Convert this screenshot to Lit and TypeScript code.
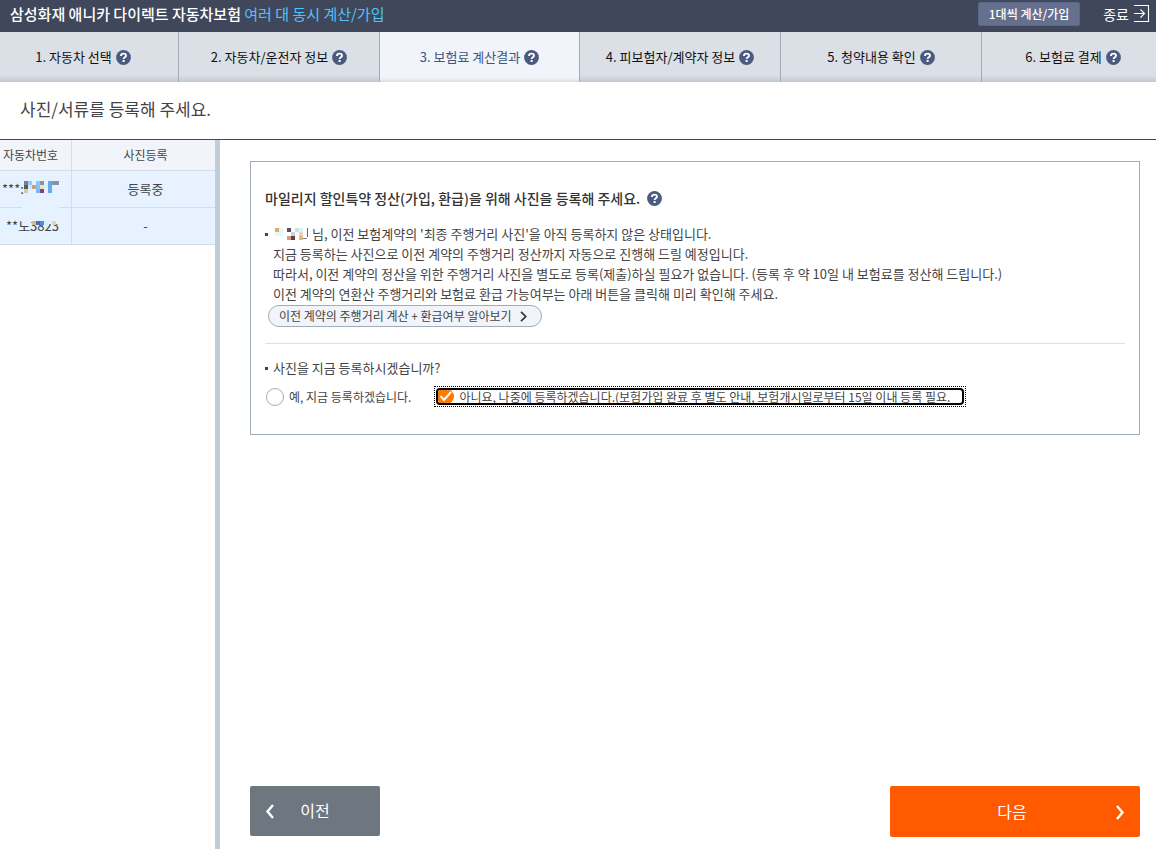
import { LitElement, html, css, svg } from "lit";
import { customElement, property, state } from "lit/decorators.js";
import { classMap } from "lit/directives/class-map.js";

@customElement("help-button")
class HelpButton extends LitElement {
  static styles = css`
    :host { display: inline-flex; }
    button { all: unset; display: flex; cursor: pointer; }
    svg { display: block; }
  `;
  @property() topic = "";
  render() {
    return html`<button type="button" aria-label="${this.topic} 도움말">
      <svg width="15" height="15" viewBox="0 0 15 15">
        <circle cx="7.5" cy="7.5" r="7.4" fill="#4a5a80"></circle>
        <path d="M5 5.9C5 4.4 6.1 3.6 7.5 3.6S10 4.4 10 5.7C10 7.2 7.6 7.3 7.6 9" fill="none" stroke="#fff" stroke-width="1.9"></path>
        <rect x="6.6" y="10" width="2" height="2" fill="#fff"></rect>
      </svg>
    </button>`;
  }
}

type Block = [number, number, number, number, string];

@customElement("masked-text")
class MaskedText extends LitElement {
  static styles = css`
    :host { display: inline-flex; }
    svg { display: block; }
  `;
  @property({ attribute: false }) blocks: Block[] = [];
  @property({ type: Number }) width = 36;
  @property({ type: Number }) height = 12;
  render() {
    return html`<svg width=${this.width} height=${this.height} shape-rendering="crispEdges" aria-hidden="true">
      ${this.blocks.map(([x, y, w, h, c]) => svg`<rect x=${x} y=${y} width=${w} height=${h} fill=${c}></rect>`)}
    </svg>`;
  }
}

const PLATE_ONE: Block[] = [
  [0, 0, 4, 4, "#6f8499"], [4, 0, 4, 4, "#94c9f8"], [12, 0, 4, 4, "#8ec6fb"], [16, 0, 4, 4, "#8b949e"],
  [24, 0, 4, 4, "#62a8ec"], [28, 0, 7, 4, "#8b949c"],
  [0, 4, 4, 4, "#555a5c"], [4, 4, 4, 4, "#cdeafc"], [8, 4, 4, 4, "#d1a068"], [12, 4, 4, 4, "#86bffa"],
  [16, 4, 4, 4, "#e9e3c4"], [20, 4, 4, 4, "#d3f0ff"], [24, 4, 4, 4, "#6aaae8"],
  [0, 8, 4, 4, "#e7c590"], [12, 8, 4, 4, "#7cb9fa"], [16, 8, 4, 4, "#84456c"], [24, 8, 4, 4, "#6aaae8"],
];
const PLATE_TWO: Block[] = [
  [0, 0, 37, 18, "#e6f2ff"], [10, 0, 27, 20, "#e6f2ff"],
  [10, 17, 4, 4, "#ddb888"], [14, 17, 4, 4, "#4a6cae"], [18, 17, 4, 4, "#4a8fd8"], [22, 17, 4, 4, "#d5f1ff"], [30, 17, 4, 4, "#ead5a6"],
];
const NAME: Block[] = [
  [0, 0, 4, 4, "#e3aa6a"], [4, 0, 4, 4, "#f0f0f0"], [0, 4, 8, 4, "#dffbff"],
  [12, 0, 4, 4, "#54506a"], [16, 0, 4, 4, "#fff8e8"], [20, 0, 4, 4, "#bfe6fb"], [24, 0, 4, 4, "#d8f2fa"],
  [16, 4, 4, 4, "#d0d0dc"], [20, 4, 4, 4, "#fdf6ee"], [24, 4, 4, 4, "#ecd3bc"],
  [12, 8, 4, 4, "#cf9f7e"], [16, 8, 4, 4, "#55443f"], [24, 8, 4, 4, "#dfb892"],
  [28, 10, 4, 1, "#888888"], [32, 0, 1, 9, "#666666"],
];

const STEPS = ["자동차 선택", "자동차/운전자 정보", "보험료 계산결과", "피보험자/계약자 정보", "청약내용 확인", "보험료 결제"];

@customElement("app-root")
class AppRoot extends LitElement {
  static styles = css`
    :host {
      display: flex; flex-direction: column; min-height: 100vh; background: #fff; color: #444;
      font-family: "Noto Sans CJK KR", "Noto Sans", sans-serif; font-size: 13px; line-height: 20px;
    }
    * { box-sizing: border-box; }
    a { color: inherit; text-decoration: none; }
    button { font: inherit; cursor: pointer; margin: 0; }
    h1, h2, h3, p, fieldset { margin: 0; padding: 0; border: 0; font: inherit; }

    .top { display: flex; align-items: center; height: 32px; padding: 0 6px 4px 10px; background: #40475b; color: #fff; }
    .brand { flex: 1; font-size: 15px; font-weight: 500; }
    .brand-sub { color: #4fc3fc; font-weight: 400; }
    .single { height: 24px; padding: 0 10px; border: 1px solid #5b678a; border-radius: 2px; background: #65708f; color: #fff; font-size: 12px; font-weight: 500; line-height: 20px; }
    .exit { display: flex; align-items: center; gap: 5px; margin-left: 23px; font-size: 14px; }

    .steps { display: grid; grid-template-columns: 179fr 201fr 200fr 201fr 201fr 174fr; margin: 0; padding: 0; list-style: none; height: 50px; }
    .step { display: flex; align-items: center; justify-content: center; gap: 4px; border-right: 1px solid #a0adb8; color: #111;
      background: linear-gradient(#dbdfe6 43px, #bfc9d2 50px); }
    .step:first-child { padding-right: 12px; }
    .step:last-child { border-right: 0; padding-left: 8px; }
    .step.current { color: #42557f; background: linear-gradient(#f1f4fa 46px, #d5dde4 50px); }

    .title { padding: 14px 20px 17px; border-bottom: 1px solid #40475b; font-size: 17px; line-height: 26px; }
    .body { display: flex; flex: 1; }
    .side { width: 220px; flex: none; border-right: 5px solid #c1cdd8; }
    .cars { width: 100%; border-spacing: 0; table-layout: fixed; text-align: center; }
    .cars th { height: 31px; padding: 0 0 0 4px; font-size: 12px; font-weight: 400; background: #f1f4fa; border-bottom: 1px solid #d4dce6; }
    .cars td { height: 37px; padding: 0 0 0 4px; background: #e6f2ff; border-bottom: 1px solid #d4dce6; }
    .cars th:first-child, .cars td:first-child { width: 72px; padding-left: 0; border-right: 1px solid #d4dce6; }
    .cars th:first-child { padding-right: 10px; }
    .plate { display: flex; align-items: center; padding-left: 2px; }
    .plate-one-mask { margin-bottom: 4px; }
    .plate-two { position: relative; padding-left: 6px; }
    .plate-mask { position: absolute; left: 22px; top: -12px; }

    .main { flex: 1; min-width: 0; display: flex; flex-direction: column; justify-content: space-between; padding: 21px 16px 12px 30px; }
    .panel { border: 1px solid #a0adb8; padding: 26px 14px 27px; }
    .panel-title { display: flex; align-items: center; gap: 7px; font-size: 14px; font-weight: 500; color: #333; }
    .notice { position: relative; margin: 16px 0 1px; padding-left: 8px; }
    .bullet::before { content: ""; position: absolute; left: 0; top: 9px; width: 3px; height: 3px; background: #444; }
    .lead { display: flex; align-items: center; gap: 4px; padding-left: 2px; }
    .check-link { display: inline-flex; align-items: center; gap: 8px; height: 22px; margin-left: 3px; padding: 0 14px 0 10px;
      border: 1px solid #a0adb8; border-radius: 11px; background: #f1f4fa; color: #444; font-size: 12px; }
    .question { position: relative; margin-top: 16px; padding-top: 14px; border-top: 1px solid #dbdfe8; }
    .question-title { position: relative; display: block; padding-left: 8px; }
    .options { display: flex; align-items: center; gap: 23px; margin-top: 8px; }
    .option { display: flex; align-items: center; gap: 4px; height: 21px; font-size: 12px; cursor: pointer; }
    .option input { appearance: none; flex: none; width: 18px; height: 18px; margin: 0 1px; border: 1px solid #a0adb8; border-radius: 50%; background: #fff; outline: none; }
    .option input:checked { width: 16px; height: 15px; margin: 0; border: 0; border-radius: 4px 8px 8px 4px;
      background: #ff7800 url("data:image/svg+xml,%3Csvg xmlns='http://www.w3.org/2000/svg' viewBox='0 0 16 15'%3E%3Cpath d='M2.5 7l3.5 4L13 3' fill='none' stroke='%23fff' stroke-width='2'/%3E%3C/svg%3E"); }
    .option.on { padding: 1px; border: 1px dotted #000; }
    .ring { display: flex; align-items: center; gap: 5px; height: 17px; padding-right: 12px; border: 2px solid #000; border-radius: 4px; overflow: hidden; }

    .nav { display: flex; justify-content: space-between; align-items: flex-start; margin-top: 24px; }
    .prev, .next { display: flex; align-items: center; border: 0; border-radius: 2px; color: #fff; font-size: 16px; font-weight: 400; }
    .prev { width: 130px; height: 50px; padding: 0 15px; background: #6e7680; }
    .next { width: 250px; height: 51px; padding: 0 15px; background: #ff5a00; }
    .label { flex: 1; padding-bottom: 2px; text-align: center; }
    .prev .label { padding-right: 10px; }
    .next .label { padding-left: 4px; }
  `;

  @state() private answer = "later";

  private option(value: string, text: string) {
    const on = this.answer === value;
    const pick = () => (this.answer = value);
    return html`<label class=${classMap({ option: true, on })}>
      <span class=${classMap({ ring: on, option: !on })}>
        <input type="radio" name="photo" .checked=${on} @change=${pick} />${text}
      </span>
    </label>`;
  }

  render() {
    return html`
      <header class="top">
        <h1 class="brand">삼성화재 애니카 다이렉트 자동차보험 <span class="brand-sub">여러 대 동시 계산/가입</span></h1>
        <button class="single" type="button">1대씩 계산/가입</button>
        <a class="exit" href="#">종료
          <svg width="16" height="18" viewBox="0 0 16 18" fill="none" stroke="#fff">
            <path d="M0 .5H14.5V16.5H0M0 8.5H10.5M6.5 4.5L10.5 8.5L6.5 12.5" stroke-width="1.1"></path>
          </svg>
        </a>
      </header>
      <ol class="steps">
        ${STEPS.map((s, i) => html`<li class=${classMap({ step: true, current: i === 2 })}>
          <span>${i + 1}. ${s}</span><help-button topic=${s}></help-button>
        </li>`)}
      </ol>
      <h2 class="title">사진/서류를 등록해 주세요.</h2>
      <div class="body">
        <aside class="side">
          <table class="cars">
            <thead><tr><th>자동차번호</th><th>사진등록</th></tr></thead>
            <tbody>
              <tr>
                <td><div class="plate">***:<masked-text class="plate-one-mask" .blocks=${PLATE_ONE}></masked-text></div></td>
                <td>등록중</td>
              </tr>
              <tr>
                <td><div class="plate plate-two">**노3823<masked-text class="plate-mask" .blocks=${PLATE_TWO} width="37" height="21"></masked-text></div></td>
                <td>-</td>
              </tr>
            </tbody>
          </table>
        </aside>
        <main class="main">
          <section class="panel">
            <h3 class="panel-title">마일리지 할인특약 정산(가입, 환급)을 위해 사진을 등록해 주세요.<help-button topic="마일리지 할인특약"></help-button></h3>
            <div class="notice bullet">
              <p class="lead"><masked-text .blocks=${NAME} width="33"></masked-text><span>님, 이전 보험계약의 '최종 주행거리 사진'을 아직 등록하지 않은 상태입니다.</span></p>
              <p>지금 등록하는 사진으로 이전 계약의 주행거리 정산까지 자동으로 진행해 드릴 예정입니다.</p>
              <p>따라서, 이전 계약의 정산을 위한 주행거리 사진을 별도로 등록(제출)하실 필요가 없습니다. (등록 후 약 10일 내 보험료를 정산해 드립니다.)</p>
              <p>이전 계약의 연환산 주행거리와 보험료 환급 가능여부는 아래 버튼을 클릭해 미리 확인해 주세요.</p>
            </div>
            <button class="check-link" type="button">이전 계약의 주행거리 계산 + 환급여부 알아보기
              <svg width="7" height="11" viewBox="0 0 7 11" fill="none" stroke="#333" stroke-width="1.7"><path d="M1 .8L5.7 5.5L1 10.2"></path></svg>
            </button>
            <fieldset class="question">
              <legend hidden>사진 등록 여부</legend>
              <p class="question-title bullet">사진을 지금 등록하시겠습니까?</p>
              <div class="options">
                ${this.option("now", "예, 지금 등록하겠습니다.")}
                ${this.option("later", "아니요, 나중에 등록하겠습니다.(보험가입 완료 후 별도 안내, 보험개시일로부터 15일 이내 등록 필요.")}
              </div>
            </fieldset>
          </section>
          <nav class="nav">
            <button class="prev" type="button">
              <svg width="10" height="16" viewBox="0 0 10 16" fill="none" stroke="#fff" stroke-width="2.4"><path d="M8 2L2.5 8.5L8 15"></path></svg>
              <span class="label">이전</span>
            </button>
            <button class="next" type="button">
              <span class="label">다음</span>
              <svg width="10" height="16" viewBox="0 0 10 16" fill="none" stroke="#fff" stroke-width="2.4"><path d="M2 2L7.5 8.5L2 15"></path></svg>
            </button>
          </nav>
        </main>
      </div>
    `;
  }
}
